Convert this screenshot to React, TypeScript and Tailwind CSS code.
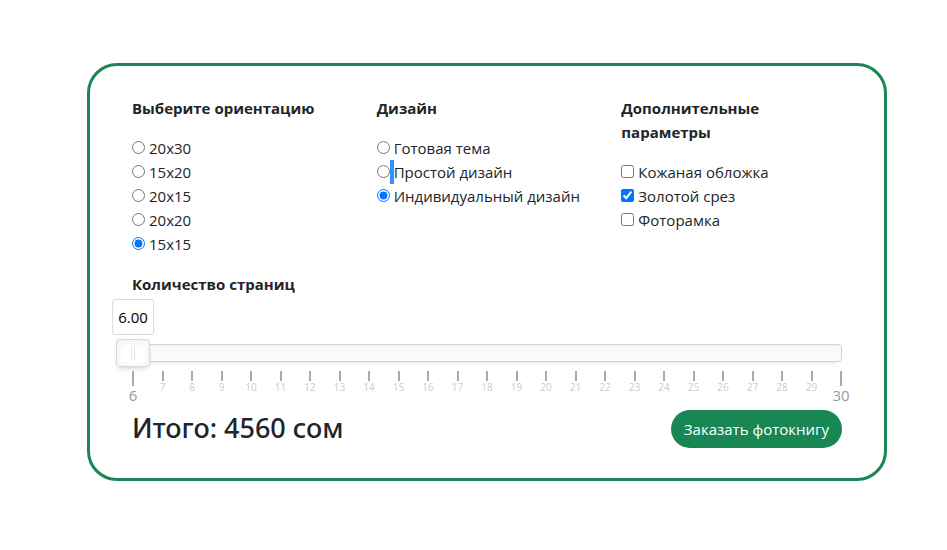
import { useState } from "react";

const orientations = ["20x30", "15x20", "20x15", "20x20", "15x15"];
const designs = ["Готовая тема", "Простой дизайн", "Индивидуальный дизайн"];
const extras = ["Кожаная обложка", "Золотой срез", "Фоторамка"];

const MIN_PAGES = 6;
const MAX_PAGES = 30;
const pips = Array.from({ length: MAX_PAGES - MIN_PAGES + 1 }, (_, i) => MIN_PAGES + i);

type ChoiceProps = {
  type: "radio" | "checkbox";
  name: string;
  label: string;
  checked: boolean;
  highlighted?: boolean;
  onChange: () => void;
};

function Choice({ type, name, label, checked, highlighted, onChange }: ChoiceProps) {
  return (
    <label className="flex h-6 items-start">
      <input
        type={type}
        name={name}
        checked={checked}
        onChange={onChange}
        className="mt-[5px] size-[13px] shrink-0"
      />
      <span className={highlighted ? "h-6 w-1 shrink-0 bg-[#3390ff]" : "h-6 w-1 shrink-0"} />
      <span>{label}</span>
    </label>
  );
}

function PageSlider({ value, onChange }: { value: number; onChange: (v: number) => void }) {
  const position = ((value - MIN_PAGES) / (MAX_PAGES - MIN_PAGES)) * 100;
  return (
    <div className="pt-12">
      <div className="relative flex h-[18px] items-center rounded-sm border border-[#d3d3d3] bg-[#fafafa] shadow-[inset_0_1px_1px_#f0f0f0,0_3px_6px_-5px_#bbb]">
        <output
          htmlFor="pages"
          className="absolute bottom-[26px] -translate-x-1/2 rounded-[3px] border border-[#d9d9d9] bg-white p-[5px] text-black"
          style={{ left: `${position}%` }}
        >
          {value.toFixed(2)}
        </output>
        <input
          id="pages"
          type="range"
          min={MIN_PAGES}
          max={MAX_PAGES}
          value={value}
          onChange={(e) => onChange(Number(e.target.value))}
          className="-mx-[17px] h-7 w-[calc(100%+34px)] shrink-0 appearance-none bg-transparent [&::-webkit-slider-thumb]:h-7 [&::-webkit-slider-thumb]:w-[34px] [&::-webkit-slider-thumb]:appearance-none [&::-webkit-slider-thumb]:rounded-[3px] [&::-webkit-slider-thumb]:border [&::-webkit-slider-thumb]:border-solid [&::-webkit-slider-thumb]:border-[#d9d9d9] [&::-webkit-slider-thumb]:bg-white [&::-webkit-slider-thumb]:bg-[linear-gradient(to_right,#e8e7e6_1px,transparent_1px,transparent_3px,#e8e7e6_3px)] [&::-webkit-slider-thumb]:bg-[length:4px_14px] [&::-webkit-slider-thumb]:bg-[position:14px_6px] [&::-webkit-slider-thumb]:bg-no-repeat [&::-webkit-slider-thumb]:shadow-[inset_0_0_1px_#fff,inset_0_1px_7px_#ebebeb,0_3px_6px_-3px_#bbb]"
        />
      </div>
      <div className="mt-[9px] flex h-[39px] justify-between px-px">
        {pips.map((pip) => {
          const large = pip === MIN_PAGES || pip === MAX_PAGES;
          return (
            <div key={pip} className="flex w-0 flex-col items-center">
              <span className={large ? "h-[15px] w-0.5 shrink-0 bg-[#aaa]" : "h-2.5 w-0.5 shrink-0 bg-[#aaa]"} />
              <span className={large ? "text-[15px] leading-[18px] text-[#999]" : "text-[10px] leading-3 text-[#ccc]"}>
                {pip}
              </span>
            </div>
          );
        })}
      </div>
    </div>
  );
}

export default function App() {
  const [orientation, setOrientation] = useState("15x15");
  const [design, setDesign] = useState("Индивидуальный дизайн");
  const [selected, setSelected] = useState(["Золотой срез"]);
  const [pages, setPages] = useState(MIN_PAGES);

  const toggle = (item: string) =>
    setSelected((s) => (s.includes(item) ? s.filter((x) => x !== item) : [...s, item]));

  return (
    <main className="bg-white pt-[63px] pr-[60px] pb-16 pl-[87px] font-['Open_Sans','Noto_Sans',sans-serif] text-[15px] leading-6 text-[#212529]">
      <form
        onSubmit={(e) => e.preventDefault()}
        className="rounded-[30px] border-3 border-[#198754] px-[42px] py-[30px]"
      >
        <div className="grid grid-cols-3 gap-6">
          <fieldset>
            <legend className="mb-4 font-bold">Выберите ориентацию</legend>
            {orientations.map((item) => (
              <Choice
                key={item}
                type="radio"
                name="orientation"
                label={item}
                checked={orientation === item}
                onChange={() => setOrientation(item)}
              />
            ))}
          </fieldset>
          <fieldset>
            <legend className="mb-4 font-bold">Дизайн</legend>
            {designs.map((item) => (
              <Choice
                key={item}
                type="radio"
                name="design"
                label={item}
                checked={design === item}
                highlighted={item === "Простой дизайн"}
                onChange={() => setDesign(item)}
              />
            ))}
          </fieldset>
          <fieldset>
            <legend className="mb-4 font-bold">
              Дополнительные
              <br />
              параметры
            </legend>
            {extras.map((item) => (
              <Choice
                key={item}
                type="checkbox"
                name="extras"
                label={item}
                checked={selected.includes(item)}
                onChange={() => toggle(item)}
              />
            ))}
          </fieldset>
        </div>
        <label htmlFor="pages" className="mt-4 block font-bold">
          Количество страниц
        </label>
        <PageSlider value={pages} onChange={setPages} />
        <div className="flex items-start justify-between">
          <h3 className="font-['Noto_Sans','Open_Sans',sans-serif] text-[27px] leading-9 font-medium">
            Итого: 4560 сом
          </h3>
          <button type="submit" className="rounded-full bg-[#198754] px-[13px] py-[7px] text-white">
            Заказать фотокнигу
          </button>
        </div>
      </form>
    </main>
  );
}
